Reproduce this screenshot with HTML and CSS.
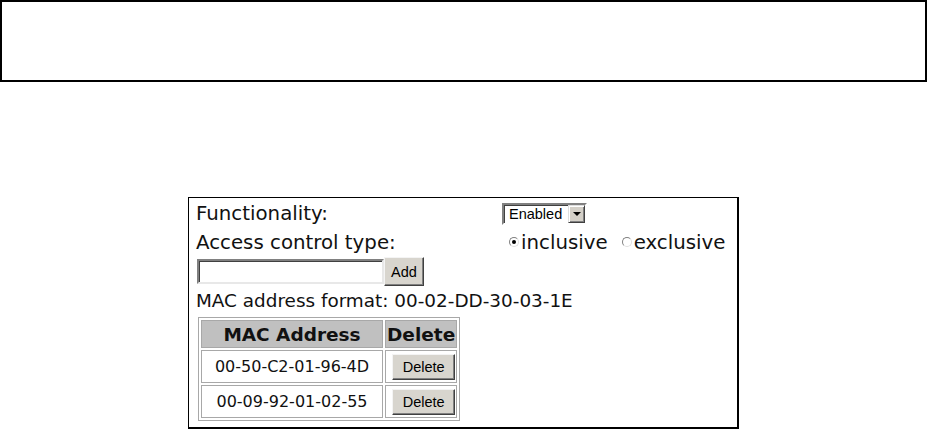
FILE: index.html
```html
<!DOCTYPE html>
<html>
<head>
<meta charset="utf-8">
<link rel="stylesheet" href="styles.css">
</head>
<body>
<div class="topbox"></div>
<div class="panel">
  <div class="row two">
    <span class="label">Functionality:</span>
    <span class="select"><span class="select-text">Enabled</span><span class="select-btn"><span class="tri"></span></span></span>
  </div>
  <div class="row two row2">
    <span class="label">Access control type:</span>
    <span class="radios">
      <span class="radio checked"></span><span class="rlabel">inclusive</span>
      <span class="radio"></span><span class="rlabel">exclusive</span>
    </span>
  </div>
  <div class="row row3">
    <span class="textbox"></span>
    <span class="btn add">Add</span>
  </div>
  <div class="row row4">MAC address format: 00-02-DD-30-03-1E</div>
  <table class="mac">
    <tr><th class="c1">MAC Address</th><th class="c2">Delete</th></tr>
    <tr><td class="c1">00-50-C2-01-96-4D</td><td class="c2"><span class="btn del">Delete</span></td></tr>
    <tr><td class="c1">00-09-92-01-02-55</td><td class="c2"><span class="btn del">Delete</span></td></tr>
  </table>
</div>
</body>
</html>
```
FILE: styles.css
```css
html { overflow: hidden; }
body {
  margin: 0;
  font-family: "DejaVu Sans", Verdana, sans-serif;
  color: #000;
  background: #fff;
}
.topbox {
  height: 82px;
  border: 2px solid #000;
  box-sizing: border-box;
}
.panel {
  width: 551px;
  height: 232px;
  margin: 115px auto 0;
  border-style: solid;
  border-color: #000;
  border-width: 1px 2px 2px 1px;
  box-sizing: border-box;
  padding: 1px 0 0 7px;
  font-size: 19.8px;
  color: #111;
}
.row {
  display: flex;
  align-items: center;
}
.two {
  display: grid;
  grid-template-columns: 306px auto;
  align-items: center;
  height: 29px;
}
.row2 { height: 28px; }
.label { white-space: nowrap; }
.select {
  display: flex;
  width: 85px;
  height: 22px;
  box-sizing: border-box;
  border-style: solid;
  border-width: 2px;
  border-color: #808080 #fff #fff #808080;
  box-shadow: inset 1px 1px #404040;
  background: #fff;
  font-family: "Liberation Sans", Arial, sans-serif;
  font-size: 14.5px;
  color: #000;
}
.select-text {
  flex: 1;
  padding-left: 5px;
  line-height: 18px;
}
.select-btn {
  width: 17px;
  height: 18px;
  box-sizing: border-box;
  background: #d4d0c8;
  border-style: solid;
  border-width: 1px;
  border-color: #dfdfdf #404040 #404040 #dfdfdf;
  box-shadow: inset 1px 1px #fff, inset -1px -1px #808080;
  display: flex;
  align-items: center;
  justify-content: center;
}
.tri {
  width: 0;
  height: 0;
  border-left: 4px solid transparent;
  border-right: 4px solid transparent;
  border-top: 4px solid #000;
  margin-top: 1px;
}
.radios {
  display: flex;
  align-items: center;
  padding-left: 7px;
}
.radio {
  width: 10px;
  height: 10px;
  box-sizing: border-box;
  border-radius: 50%;
  border: 1px solid;
  border-color: #808080 #e0e0e0 #e0e0e0 #808080;
  background: #fff;
  display: flex;
  align-items: center;
  justify-content: center;
  margin-right: 2px;
}
.radio.checked::after {
  content: "";
  width: 4px;
  height: 4px;
  border-radius: 50%;
  background: #000;
}
.rlabel { margin-right: 14px; }
.row3 {
  height: 31px;
  padding-left: 1px;
}
.textbox {
  width: 187px;
  height: 25px;
  box-sizing: border-box;
  border-style: solid;
  border-width: 2px;
  border-color: #808080 #e8e8e8 #e8e8e8 #808080;
  box-shadow: inset 1px 1px #404040;
  background: #fff;
}
.btn {
  display: inline-flex;
  align-items: center;
  justify-content: center;
  box-sizing: border-box;
  background: #d8d5ce;
  border-style: solid;
  border-width: 1px;
  border-color: #f4f4f4 #404040 #404040 #f4f4f4;
  box-shadow: inset -1px -1px #808080;
  font-family: "Liberation Sans", Arial, sans-serif;
  font-size: 14.5px;
  color: #000;
}
.add {
  width: 40px;
  height: 29px;
}
.row4 {
  height: 26px;
  white-space: nowrap;
  font-size: 18.4px;
}
.mac {
  margin: 4px 0 0 2px;
  border: 1px solid #a8a8a8;
  border-spacing: 2px;
}
.mac th, .mac td {
  border: 1px solid #a8a8a8;
  padding: 0 1px;
  text-align: center;
}
.mac th {
  background: #c0c0c0;
  font-weight: bold;
  font-size: 18.5px;
  height: 26px;
}
.mac td {
  font-size: 16px;
  height: 31px;
}
.mac td.c2 {
  text-align: right;
}
.mac .c1 { width: 178px; }
.mac .c2 { width: 68px; }
.del {
  width: 63px;
  height: 26px;
}
```
